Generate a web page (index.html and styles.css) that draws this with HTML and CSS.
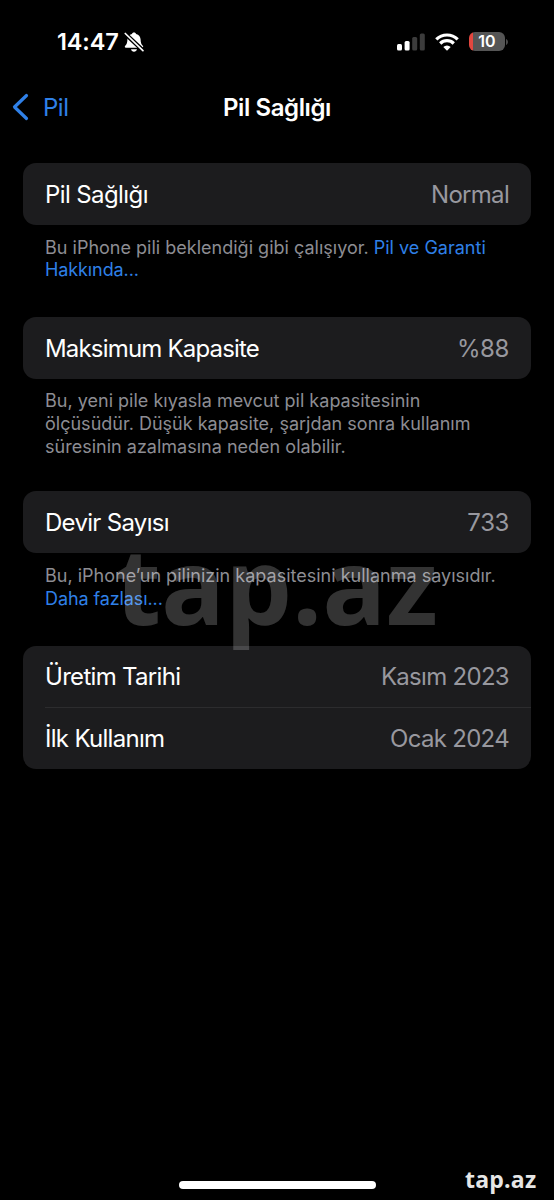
FILE: index.html
```html
<!DOCTYPE html>
<html lang="tr">
<head>
<meta charset="utf-8">
<title>Pil Sağlığı</title>
<link rel="stylesheet" href="styles.css">
</head>
<body>
<div class="screen">
  <header class="status">
    <div class="status-left">
      <span class="time">14:47</span>
      <svg class="bell" width="20" height="20" viewBox="0 0 20 20">
        <path fill="#fff" d="M10 .5c1.200 0 1.900.7 2.100 1.500 2.900.8 4.400 3 4.500 5.600.1 3.500.8 4.800 2.200 6.200.8.9.4 2-.7 2H1.900c-1.100 0-1.500-1.100-.7-2C2.600 12.400 3.300 11.100 3.400 7.600 3.500 5 5 2.800 7.900 2 8.100 1.200 8.800.5 10 .5zM7 17.200h6c-.3 1.500-1.500 2.500-3 2.500s-2.700-1-3-2.500z"/>
        <path stroke="#000" stroke-width="4.200" d="M1 1.500 19 18.500"/>
        <path stroke="#fff" stroke-width="1.700" stroke-linecap="round" d="M1.300 1.500 18.900 18.700"/>
      </svg>
    </div>
    <div class="status-right">
      <svg width="28" height="18" viewBox="0 0 28 18">
        <rect x="0" y="11" width="5" height="6.500" rx="1.500" fill="#fff"/>
        <rect x="7.600" y="8" width="5" height="9.500" rx="1.500" fill="#fff"/>
        <rect x="15.200" y="4" width="5" height="13.500" rx="1.500" fill="#3c3c3c"/>
        <rect x="22.800" y="0.500" width="5" height="17" rx="1.500" fill="#3c3c3c"/>
      </svg>
      <svg class="wifi" width="24" height="18" viewBox="0 0 24 18">
        <g fill="none" stroke="#fff" stroke-width="3.200">
          <path d="M1.300 6.400a15.200 15.200 0 0 1 21.400 0"/>
          <path d="M5.200 10.500a9.700 9.700 0 0 1 13.600 0"/>
        </g>
        <path fill="#fff" d="M8.300 14a5.300 5.300 0 0 1 7.400 0L12 17.700z"/>
      </svg>
      <div class="battery"><span class="battery-level">10</span></div>
      <svg class="battery-tip" width="2" height="6" viewBox="0 0 2 6"><path fill="#4a4a4a" d="M0 0c2.600 1 2.600 5 0 6z"/></svg>
    </div>
  </header>

  <nav class="nav">
    <a class="back">
      <svg width="17" height="28" viewBox="0 0 17 28"><path d="M14.500 2.500 2.500 14l12 11.500" fill="none" stroke="#2f80e8" stroke-width="3.200" stroke-linecap="round" stroke-linejoin="round"/></svg>
      <span class="back-label">Pil</span>
    </a>
    <h1 class="title">Pil Sağlığı</h1>
  </nav>

  <main class="content">
    <section class="group">
      <div class="card"><div class="row"><span class="label label-health">Pil Sağlığı</span><span class="value">Normal</span></div></div>
      <p class="note">Bu iPhone pili beklendiği gibi çalışıyor. <a class="link">Pil ve Garanti</a><br><a class="link link-short">Hakkında...</a></p>
    </section>
    <section class="group group-capacity">
      <div class="card"><div class="row"><span class="label label-capacity">Maksimum Kapasite</span><span class="value value-number">%88</span></div></div>
      <p class="note note-capacity">Bu, yeni pile kıyasla mevcut pil kapasitesinin<br>ölçüsüdür. Düşük kapasite, şarjdan sonra kullanım<br>süresinin azalmasına neden olabilir.</p>
    </section>
    <section class="group">
      <div class="card"><div class="row"><span class="label">Devir Sayısı</span><span class="value value-number">733</span></div></div>
      <p class="note">Bu, iPhone’un pilinizin kapasitesini kullanma sayısıdır.<br><a class="link link-short">Daha fazlası...</a></p>
    </section>
    <section class="group">
      <div class="card">
        <div class="row"><span class="label">Üretim Tarihi</span><span class="value">Kasım 2023</span></div>
        <div class="row row-divided"><span class="label">İlk Kullanım</span><span class="value">Ocak 2024</span></div>
      </div>
    </section>
  </main>

  <div class="home-bar"></div>
  <div class="watermark">tap.az</div>
  <div class="brand">tap.az</div>
</div>
</body>
</html>
```
FILE: styles.css
```css
* { box-sizing: border-box; }
body { margin: 0; background: #000; }
.screen {
  position: relative;
  display: flex;
  flex-direction: column;
  width: 554px;
  height: 1200px;
  overflow: hidden;
  background: #000;
  color: #fff;
  font-family: Inter, "Liberation Sans", sans-serif;
}
.status {
  display: flex;
  justify-content: space-between;
  align-items: center;
  height: 83px;
  padding: 0 46px 0 57px;
}
.status-left, .status-right { display: flex; align-items: center; }
.time { font-size: 23.5px; font-weight: 600; letter-spacing: -0.15px; }
.bell { margin-left: 5px; }
.wifi { margin-left: 10px; }
.battery {
  display: flex;
  align-items: center;
  justify-content: center;
  width: 36px;
  height: 19px;
  margin-left: 10px;
  border-radius: 6px;
  background: linear-gradient(to right, #e2473f 4px, #555 4px);
}
.battery-level { font-size: 16px; font-weight: 600; line-height: 19px; }
.battery-tip { margin-left: 1px; }
.nav {
  display: grid;
  grid-template-columns: 1fr auto 1fr;
  align-items: center;
  height: 48px;
  padding: 0 12px;
}
.back { display: flex; align-items: center; gap: 14px; color: #2f80e8; }
.back-label { font-size: 24px; letter-spacing: -0.5px; }
.title { margin: 0; font-size: 24px; font-weight: 600; letter-spacing: -0.4px; }
.content { padding: 32px 23px 0; }
.group { height: 154.3px; }
.group-capacity { height: 174px; }
.card { border-radius: 13px; background: #1c1c1e; }
.row {
  display: flex;
  align-items: center;
  justify-content: space-between;
  height: 61.5px;
  padding: 1px 22px 0;
  font-size: 24px;
  letter-spacing: -0.7px;
}
.row-divided {
  background: linear-gradient(#2c2c2e, #2c2c2e) 22px 0 / 100% 1px no-repeat;
}
.label-health { letter-spacing: -0.6px; }
.label-capacity { letter-spacing: -0.82px; }
.value { color: #98989f; }
.value-number { letter-spacing: -0.4px; }
.note {
  margin: 0;
  padding: 12px 22px 0;
  color: #8d8d93;
  font-size: 18px;
  line-height: 22.7px;
  letter-spacing: 0.01px;
  white-space: nowrap;
}
.note-capacity { padding-top: 11.5px; }
.link { color: #2f80e8; }
.link-short { letter-spacing: -0.1px; }
.home-bar {
  position: absolute;
  left: 179px;
  top: 1181px;
  width: 197px;
  height: 8px;
  border-radius: 4px;
  background: #fff;
}
.watermark {
  position: absolute;
  left: 115px;
  top: 509px;
  color: rgba(255, 255, 255, 0.2);
  font: 700 106px/150px "Open Sans", sans-serif;
}
.brand {
  position: absolute;
  left: 465px;
  top: 1163px;
  color: #e6e6e6;
  font: 700 23px/32px "Open Sans", sans-serif;
  letter-spacing: 0.2px;
}
```
